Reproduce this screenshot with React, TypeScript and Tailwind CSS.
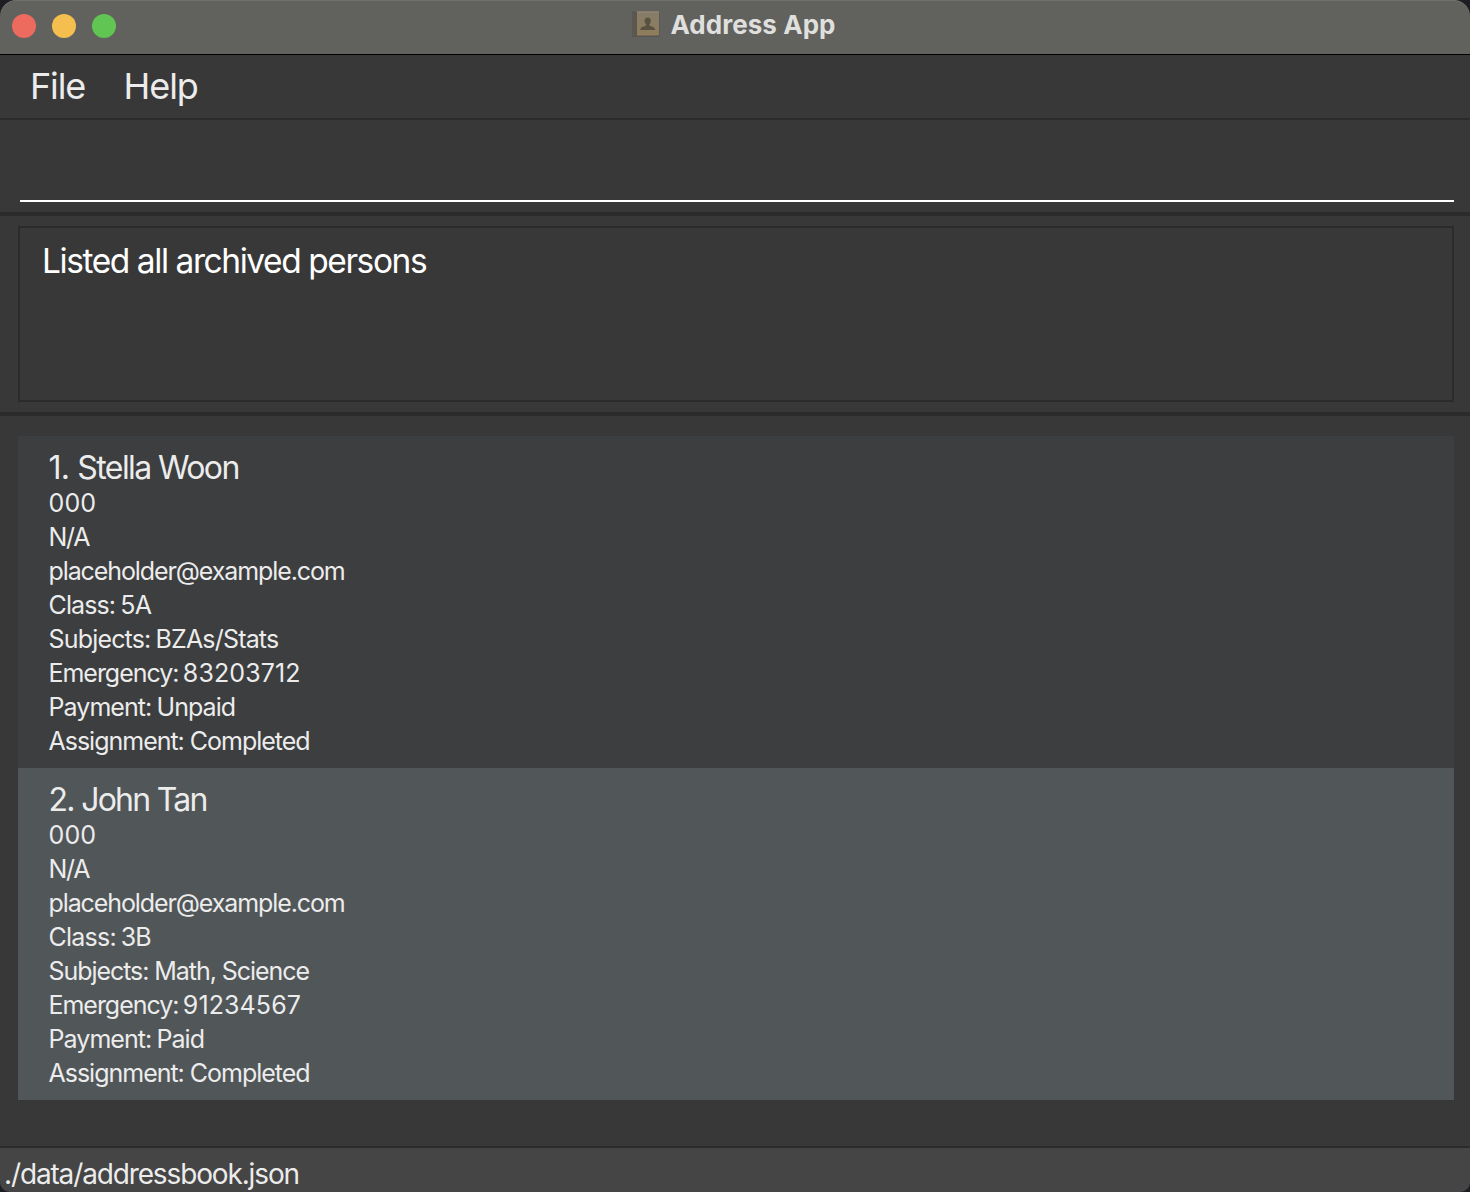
import React from 'react';

type Line = { text: string; tail?: string; spacing: string };
type Person = {
  index: string;
  name: string;
  indexClass: string;
  nameClass: string;
  rowClass: string;
  lines: Line[];
};

const people: Person[] = [
  {
    index: '1. ',
    name: 'Stella Woon',
    indexClass: 'tracking-[-0.8px]',
    nameClass: 'tracking-[-1.6px]',
    rowClass: 'bg-[#3c3e3f]',
    lines: [
      { text: '000', spacing: 'tracking-[0.13px]' },
      { text: 'N/A', spacing: 'tracking-[-1.27px]' },
      { text: 'placeholder@example.com', spacing: 'tracking-[-1.1px]' },
      { text: 'Class: 5A', spacing: 'tracking-[-0.88px] [word-spacing:-1px]' },
      { text: 'Subjects: BZAs/Stats', spacing: 'tracking-[-0.82px] [word-spacing:-1.2px]' },
      { text: 'Emergency: ', tail: '83203712', spacing: 'tracking-[-1.04px] [word-spacing:-1.5px]' },
      { text: 'Payment: Unpaid', spacing: 'tracking-[-0.93px] [word-spacing:-1px]' },
      { text: 'Assignment: Completed', spacing: 'tracking-[-1.01px]' },
    ],
  },
  {
    index: '2. ',
    name: 'John Tan',
    indexClass: 'tracking-[-1.7px]',
    nameClass: 'tracking-[-1.75px]',
    rowClass: 'bg-[#515658]',
    lines: [
      { text: '000', spacing: 'tracking-[0.13px]' },
      { text: 'N/A', spacing: 'tracking-[-1.27px]' },
      { text: 'placeholder@example.com', spacing: 'tracking-[-1.1px]' },
      { text: 'Class: 3B', spacing: 'tracking-[-0.76px] [word-spacing:-1.5px]' },
      { text: 'Subjects: Math, Science', spacing: 'tracking-[-1.06px]' },
      { text: 'Emergency: ', tail: '91234567', spacing: 'tracking-[-1.04px] [word-spacing:-1.5px]' },
      { text: 'Payment: Paid', spacing: 'tracking-[-0.93px] [word-spacing:-1px]' },
      { text: 'Assignment: Completed', spacing: 'tracking-[-1.01px]' },
    ],
  },
];

function BookIcon() {
  return (
    <svg width="30" height="30" viewBox="0 0 30 30" aria-hidden="true">
      <defs>
        <linearGradient id="cover" x1="0" y1="0" x2="0" y2="1">
          <stop offset="0" stopColor="#857c69" />
          <stop offset="1" stopColor="#8f7d5b" />
        </linearGradient>
      </defs>
      <rect x="1" y="3" width="27.500" height="25" rx="1.5" fill="#575551" />
      <rect x="1" y="2.500" width="5" height="24.500" rx="1" fill="#5a5650" />
      <rect x="5.500" y="2.500" width="22.500" height="24" rx="0.8" fill="url(#cover)" />
      <path d="M5.500 3h22.500" stroke="#978c75" strokeWidth="1" />
      <path d="M5.500 2.500v24.500" stroke="#5c564b" strokeWidth="1" />
      <path
        d="M16.700 8.500c-2.100 0-3.200 1.500-3.100 3.500.1 1.600.6 2.600 1.400 3.200v1.400c-1.600 1-5.300 1.100-5.800 4.300h15c-.5-3.200-4.200-3.300-5.800-4.300v-1.400c.8-.6 1.300-1.600 1.400-3.200.1-2-1-3.500-3.100-3.500z"
        fill="#595142"
      />
    </svg>
  );
}

export default function App() {
  return (
    <div className="h-[1192px] w-[1470px] overflow-hidden bg-[#1d1e24]">
      <div className="flex h-full flex-col overflow-hidden rounded-t-[16px] rounded-b-[10px] bg-[#383838] font-['Inter',sans-serif] text-[#ececec]">
        <header className="grid h-[55px] shrink-0 grid-cols-[1fr_auto_1fr] rounded-t-[16px] border-b border-black bg-[#61615e] shadow-[inset_0_1px_0_#6f6f6c]">
          <div className="flex gap-4 pt-[14px] pl-3">
            <span className="size-6 rounded-full bg-[#ed6a5e]" />
            <span className="size-6 rounded-full bg-[#f5bf4f]" />
            <span className="size-6 rounded-full bg-[#61c554]" />
          </div>
          <div className="flex pt-[9px] pr-[3px]">
            <BookIcon />
            <h1 className="ml-[9px] text-[26px] leading-8 font-bold tracking-[0.05px] whitespace-nowrap text-[#dfdfdd]">
              Address App
            </h1>
          </div>
        </header>

        <nav className="flex h-[65px] shrink-0 border-b-2 border-[#2b2b2b] pl-[30px] text-[36px] leading-[63px]">
          <span className="w-[93.500px] tracking-[-1.16px]">File</span>
          <span className="tracking-[-1.05px]">Help</span>
        </nav>

        <div className="h-24 shrink-0 border-b-4 border-[#2b2b2b] pr-4 pl-5">
          <div className="h-[82px] border-b-2 border-white" />
        </div>

        <section className="h-[200px] shrink-0 border-b-4 border-[#2b2b2b] pt-2.5 pr-4 pl-[18px]">
          <div className="h-44 border-2 border-[#2b2b2b] pt-[9px] pl-[22px] text-[33.5px] leading-[48px] tracking-[-1.43px] text-white">
            Listed all archived persons
          </div>
        </section>

        <main className="flex-1 pt-5 pr-4 pl-[18px]">
          {people.map((p) => (
            <article key={p.name} className={`h-[332px] pt-2.5 pl-[30.5px] ${p.rowClass}`}>
              <h2 className={`text-[32px] leading-[43px] whitespace-pre ${p.nameClass}`}>
                <span className={p.indexClass}>{p.index}</span>
                {p.name}
              </h2>
              <div className="-mt-[3px]">
                {p.lines.map((l) => (
                  <p key={l.text} className={`text-[25px] leading-[34px] whitespace-pre ${l.spacing}`}>
                    {l.text}
                    {l.tail && <span className="tracking-[0.1px]">{l.tail}</span>}
                  </p>
                ))}
              </div>
            </article>
          ))}
        </main>

        <footer className="h-[46px] shrink-0 border-t-2 border-[#2b2b2b] bg-[#454545] pl-1 text-[28px] leading-[52px] tracking-[-1.14px]">
          ./data/addressbook.json
        </footer>
      </div>
    </div>
  );
}
